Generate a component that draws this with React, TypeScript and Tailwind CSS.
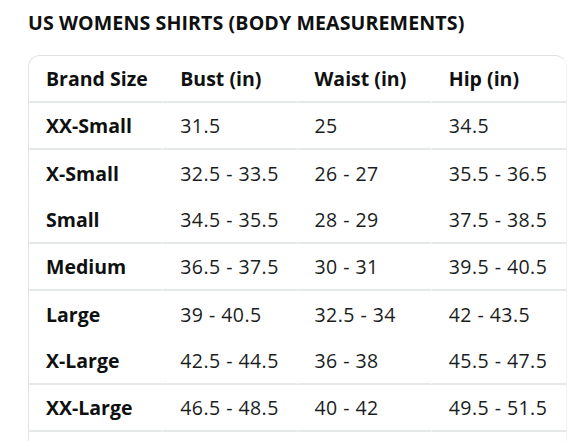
import React from "react";

const rows: { size: string; bust: string; waist: string; hip: string; line: boolean }[] = [
  { size: "XX-Small", bust: "31.5", waist: "25", hip: "34.5", line: true },
  { size: "X-Small", bust: "32.5 - 33.5", waist: "26 - 27", hip: "35.5 - 36.5", line: false },
  { size: "Small", bust: "34.5 - 35.5", waist: "28 - 29", hip: "37.5 - 38.5", line: true },
  { size: "Medium", bust: "36.5 - 37.5", waist: "30 - 31", hip: "39.5 - 40.5", line: true },
  { size: "Large", bust: "39 - 40.5", waist: "32.5 - 34", hip: "42 - 43.5", line: false },
  { size: "X-Large", bust: "42.5 - 44.5", waist: "36 - 38", hip: "45.5 - 47.5", line: true },
  { size: "XX-Large", bust: "46.5 - 48.5", waist: "40 - 42", hip: "49.5 - 51.5", line: true },
];

export default function App() {
  return (
    <div
      className="w-[588px] h-[441px] overflow-hidden bg-white text-[#0f1111]"
      style={{ fontFamily: '"Open Sans", "Noto Sans", Arial, sans-serif' }}
    >
      <h2 className="pl-[28px] pt-[10px] text-[19.6px] leading-[26px] font-bold tracking-[0.1px]">
        US WOMENS SHIRTS (BODY MEASUREMENTS)
      </h2>
      <div className="ml-[28px] mt-[19px] w-[539px] rounded-t-[12px] border-t border-l border-r border-t-[#dfe3e3] border-l-[#dfe3e3] border-r-[#f1f3f3]">
        <table className="w-full table-fixed border-separate border-spacing-0 text-[19.5px] leading-[26px]">
          <thead>
            <tr className="h-[47px] text-left">
              {["Brand Size", "Bust (in)", "Waist (in)", "Hip (in)"].map((h, i) => (
                <th
                  key={h}
                  className={`pl-[17px] font-bold border-b-2 border-[#e6e9e9] ${i < 3 ? "border-r border-r-white" : ""}`}
                >
                  {h}
                </th>
              ))}
            </tr>
          </thead>
          <tbody>
            {rows.map((r) => {
              const cells = [r.size, r.bust, r.waist, r.hip];
              return (
                <tr key={r.size} className="h-[47px]">
                  {cells.map((c, i) => (
                    <td
                      key={i}
                      className={`pl-[17px] ${i === 0 ? "font-bold" : "font-normal tracking-[0.45px] text-[#1a1d1d]"} ${
                        r.line ? "border-b-2 border-[#e6e9e9]" : ""
                      } ${i < 3 ? "border-r border-r-white" : ""}`}
                    >
                      {c}
                    </td>
                  ))}
                </tr>
              );
            })}
            <tr className="h-[47px]">
              {[0, 1, 2, 3].map((i) => (
                <td key={i} className={`pl-[17px] ${i < 3 ? "border-r border-r-white" : ""}`}></td>
              ))}
            </tr>
          </tbody>
        </table>
      </div>
    </div>
  );
}
